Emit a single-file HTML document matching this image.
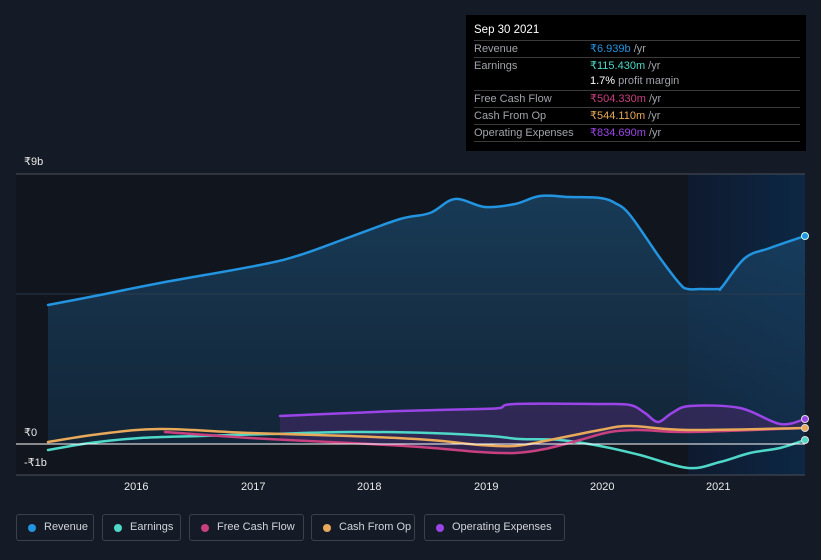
<!DOCTYPE html>
<html><head><meta charset="utf-8"><style>
body{margin:0;width:821px;height:560px;background:#151b26;font-family:"Liberation Sans","DejaVu Sans",sans-serif;overflow:hidden;position:relative}
.tt{position:absolute;left:466px;top:15px;width:340px;height:136px;background:#000;color:#fff;font-size:11px}
.tt .h{position:absolute;left:8px;top:9px;font-size:11.5px}
.row{position:absolute;left:8px;width:326px;border-top:1px solid #3a3a3a;height:16px;line-height:16px;white-space:nowrap}
.row .l{color:#a0a4aa;position:absolute;left:0}
.row .v{position:absolute;left:116px}
.u{color:#a0a4aa}
.lg{position:absolute;top:514px;height:27px;border:1px solid #3a414c;border-radius:3px;color:#d0d4da;font-size:11px;line-height:25px;box-sizing:border-box;padding-left:27px;white-space:nowrap}
.lg i{position:absolute;left:11px;top:9px;width:8px;height:8px;border-radius:50%}
.ax{position:absolute;color:#e8e8e8;font-size:11px}
</style></head><body>
<svg width="821" height="560" style="position:absolute;left:0;top:0">
<defs>
<linearGradient id="rv" x1="0" y1="0" x2="0" y2="1"><stop offset="0" stop-color="#1b4a6e" stop-opacity=".7"/><stop offset="1" stop-color="#153049" stop-opacity=".6"/></linearGradient>
<linearGradient id="hl" x1="0" y1="0" x2="1" y2="0"><stop offset="0" stop-color="#0e1a2e"/><stop offset="1" stop-color="#0d2744"/></linearGradient>
</defs>
<rect x="16" y="174" width="672" height="301" fill="#10151e"/>
<rect x="688" y="174" width="117" height="301" fill="url(#hl)"/>
<path id="revA" fill="url(#rv)"/>
<path id="opA" fill="#3a2a5e" opacity=".75"/>
<line x1="16" y1="174" x2="805" y2="174" stroke="#4a4f58"/>
<line x1="16" y1="294" x2="805" y2="294" stroke="#2c3b4c"/>
<line x1="16" y1="475" x2="805" y2="475" stroke="#4a4f58"/>
<g fill="none" stroke-width="2.5" stroke-linejoin="round" stroke-linecap="round">
<path id="rev" stroke="#2394e0"/>
<path id="op" stroke="#9b45e8"/>
<path id="ea" stroke="#4fd8c8"/>
<path id="fcf" stroke="#c8407e"/>
<path id="co" stroke="#e8a95a"/>
</g>
<line x1="16" y1="444" x2="805" y2="444" stroke="#fff" stroke-width="1"/>
<circle cx="805" cy="236" r="3.5" fill="#2394e0" stroke="#cfe" stroke-width="1"/>
<circle cx="805" cy="419" r="3.5" fill="#9b45e8" stroke="#ddd" stroke-width="1"/>
<circle cx="805" cy="428" r="3.5" fill="#e8a95a" stroke="#ddd" stroke-width="1"/>
<circle cx="805" cy="440" r="3.5" fill="#4fd8c8" stroke="#ddd" stroke-width="1"/>
</svg>
<script>
function sm(p){var d="M"+p[0][0]+","+p[0][1];for(var i=0;i<p.length-1;i++){var a=p[i-1]||p[i],b=p[i],c=p[i+1],e=p[i+2]||c;var t=6;d+=" C"+(b[0]+(c[0]-a[0])/t)+","+(b[1]+(c[1]-a[1])/t)+" "+(c[0]-(e[0]-b[0])/t)+","+(c[1]-(e[1]-b[1])/t)+" "+c[0]+","+c[1];}return d;}
var R=[[48,305],[100,295],[160,283],[260,265],[300,255],[350,237],[400,219],[430,213],[455,199],[485,207],[515,204],[540,196],[570,197],[600,198],[615,203],[630,215],[660,258],[680,284],[688,289],[700,289],[718,289],[722,287],[745,258],[770,248],[805,236]];
var O=[[280,416],[350,413],[400,411],[480,409],[500,408],[515,404],[600,404],[630,405],[645,413],[658,422],[672,413],[690,406],[740,408],[780,424],[805,419]];
var E=[[48,450],[90,443],[140,438],[200,436],[270,434],[350,432],[430,433],[490,436],[520,439],[560,440],[600,446],[640,455],[688,468],[720,462],[750,453],[780,448],[805,440]];
var F=[[165,432],[250,438],[350,443],[420,447],[480,452],[515,453],[545,449],[580,440],[610,432],[640,430],[688,432],[805,428]];
var C=[[48,442],[100,434],[160,429],[250,433],[350,436],[430,440],[480,445],[515,446],[550,440],[600,430],[630,426],[688,430],[805,428]];
function s(id,d){document.getElementById(id).setAttribute("d",d)}
s("rev",sm(R));s("revA",sm(R)+" L805,444 L48,444Z");
s("op",sm(O));s("opA",sm(O)+" L805,428 L688,432 L640,430 L610,432 L580,440 L545,449 L515,453 L480,452 L420,447 L350,443 L280,440Z");
s("ea",sm(E));s("fcf",sm(F));s("co",sm(C));
</script>
<div class="ax" style="left:24px;top:155px">₹9b</div>
<div class="ax" style="left:24px;top:426px">₹0</div>
<div class="ax" style="left:24px;top:456px">-₹1b</div>
<div class="ax" style="left:124px;top:481px">2016</div>
<div class="ax" style="left:241px;top:481px">2017</div>
<div class="ax" style="left:357px;top:481px">2018</div>
<div class="ax" style="left:474px;top:481px">2019</div>
<div class="ax" style="left:590px;top:481px">2020</div>
<div class="ax" style="left:706px;top:481px">2021</div>
<div class="tt">
<div class="h">Sep 30 2021</div>
<div class="row" style="top:25px"><span class="l">Revenue</span><span class="v"><span style="color:#2394e0">₹6.939b</span> <span class="u">/yr</span></span></div>
<div class="row" style="top:42px"><span class="l">Earnings</span><span class="v"><span style="color:#4fd8c8">₹115.430m</span> <span class="u">/yr</span></span></div>
<div class="row" style="top:58px;border-top:none"><span class="v">1.7% <span class="u">profit margin</span></span></div>
<div class="row" style="top:75px"><span class="l">Free Cash Flow</span><span class="v"><span style="color:#c8407e">₹504.330m</span> <span class="u">/yr</span></span></div>
<div class="row" style="top:92px"><span class="l">Cash From Op</span><span class="v"><span style="color:#e8a95a">₹544.110m</span> <span class="u">/yr</span></span></div>
<div class="row" style="top:109px;border-bottom:1px solid #3a3a3a"><span class="l">Operating Expenses</span><span class="v"><span style="color:#9b45e8">₹834.690m</span> <span class="u">/yr</span></span></div>
</div>
<div class="lg" style="left:16px;width:78px"><i style="background:#2394e0"></i>Revenue</div>
<div class="lg" style="left:102px;width:79px"><i style="background:#4fd8c8"></i>Earnings</div>
<div class="lg" style="left:189px;width:115px"><i style="background:#c8407e"></i>Free Cash Flow</div>
<div class="lg" style="left:311px;width:104px"><i style="background:#e8a95a"></i>Cash From Op</div>
<div class="lg" style="left:424px;width:141px"><i style="background:#9b45e8"></i>Operating Expenses</div>
</body></html>
